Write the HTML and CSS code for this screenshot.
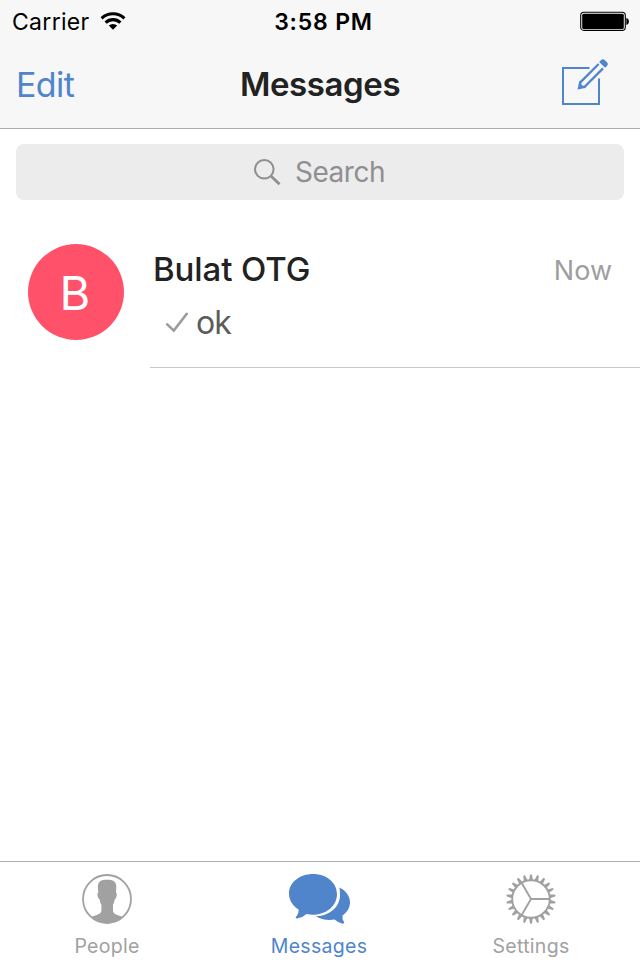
FILE: index.html
```html
<!DOCTYPE html>
<html lang="en">
  <head>
    <meta charset="UTF-8" />
    <meta name="viewport" content="width=device-width, initial-scale=1.0" />
    <title>Messages</title>
    <link rel="stylesheet" href="styles.css" />
  </head>
  <body>
    <header class="header">
      <div class="status-bar">
        <div class="carrier">
          <span class="carrier-name">Carrier</span>
          <svg class="wifi" width="26" height="20" viewBox="0 0 26 20">
            <g fill="none" stroke="#000" stroke-width="3.1">
              <path d="M1.6 7.4a16.3 16.3 0 0 1 22.8 0" />
              <path d="M5.6 11.6a10.6 10.6 0 0 1 14.8 0" />
            </g>
            <path d="M13 18.8L8.8 14.6a6 6 0 0 1 8.4 0z" />
          </svg>
        </div>
        <span class="clock">3:58 PM</span>
        <div class="battery">
          <svg width="50" height="20" viewBox="0 0 50 20">
            <rect x="0.7" y="1.2" width="44.6" height="18.2" rx="3.2" fill="none" stroke="#000" stroke-width="1.1" />
            <rect x="2.2" y="2.7" width="41.6" height="15.2" rx="1.5" />
            <path d="M46.3 6.8q2.7 1 2.7 3.6t-2.7 3.6z" />
          </svg>
        </div>
      </div>
      <nav class="nav-bar">
        <a class="nav-edit">Edit</a>
        <h1 class="nav-title">Messages</h1>
        <a class="nav-compose">
          <svg width="48" height="48" viewBox="0 0 48 48">
            <path d="M29.5 10H3v36h36V20.5" fill="none" stroke="#5085cb" stroke-width="2" />
            <g transform="translate(17.5 31.5) rotate(-45)" fill="#5085cb">
              <path d="M6 -3.1H33M6 3.1H33" fill="none" stroke="#5085cb" stroke-width="2.3" />
              <path d="M0 0L6.5 -4.25H8.5L6 0L8.5 4.25H6.5z" />
              <path d="M34.8 -4.2H37.2Q40 -4.2 40 -1.9V1.9Q40 4.2 37.2 4.2H34.8z" />
            </g>
          </svg>
        </a>
      </nav>
    </header>

    <main class="content">
      <div class="search">
        <svg class="search-icon" width="28" height="28" viewBox="0 0 28 28" fill="none" stroke="#8e8e93">
          <circle cx="11.3" cy="11.3" r="9.3" stroke-width="2" />
          <path d="M18.2 18.2L26.5 26.3" stroke-width="2.8" />
        </svg>
        <span class="search-label">Search</span>
      </div>

      <div class="chat">
        <div class="avatar">B</div>
        <div class="chat-body">
          <div class="chat-top">
            <span class="chat-name">Bulat OTG</span>
            <span class="chat-date">Now</span>
          </div>
          <div class="chat-message">
            <svg class="check" width="24" height="22" viewBox="0 0 24 22">
              <path d="M2.2 13.4L8.8 19.6L21.8 2.8" fill="none" stroke="#9b9b9b" stroke-width="2.6" stroke-linecap="round" />
            </svg>
            <span class="chat-text">ok</span>
          </div>
        </div>
      </div>
    </main>

    <footer class="tab-bar">
      <a class="tab">
        <svg width="52" height="52" viewBox="0 0 52 52">
          <circle cx="26" cy="26" r="24" fill="none" stroke="#a1a1a1" stroke-width="1.8" />
          <path d="M26 6.8C20 6.8 16.9 8.5 16.9 14L17.2 19.5Q16.1 20 16.5 22.5Q17 26 18.6 26.5Q19 30 20.4 31.5V38Q20 40.5 17 41.5L11.5 43.4L9.8 44.2A24.400 24.400 0 0 0 42.2 44.2L40.5 43.4L35 41.5Q32.3 40.5 32 38V31.5Q33.3 30 33.7 26.5Q35.3 26 35.7 22.5Q36.1 20 35 19.5L35.3 14C35.3 8.5 32 6.8 26 6.8z" fill="#a1a1a1" />
        </svg>
        <span class="tab-label">People</span>
      </a>
      <a class="tab tab-active">
        <svg width="64" height="52" viewBox="0 0 64 52" fill="#5085cb">
          <path d="M52.5 14.4C58.3 17.2 63 22.5 63 29.3C63 34.5 60.2 39.5 55.5 42.5Q54.8 46 57.2 49.6Q57 51.2 55 50.6Q50 49 47.5 46.6C41 47.6 33 46.5 29 43.3C42.5 42.8 53 34 53 22Q53 18 52.5 14.4z" />
          <path d="M26 1C12.5 1 2 9.5 2 20.5C2 27 5.5 32.8 11.5 36.4Q12 40.5 8.6 44.2Q8.8 45.8 11 45.3Q16.5 44 19.5 41Q22.5 41.8 26 41.8C39.5 41.8 50 32.5 50 21.3C50 9.5 39.5 1 26 1z" />
        </svg>
        <span class="tab-label">Messages</span>
      </a>
      <a class="tab">
        <svg class="gear" width="52" height="52" viewBox="-26 -26 52 52">
          <g fill="none" stroke="#a1a1a1" stroke-width="1.9">
            <circle r="18.8" />
            <path d="M0 0H18.5M0 0L-9.3 -16M0 0L-9.3 16" />
          </g>
          <g id="teeth" fill="#a1a1a1"></g>
        </svg>
        <span class="tab-label">Settings</span>
      </a>
    </footer>

    <script>
      var teeth = document.getElementById("teeth");
      var count = 22;
      for (var i = 0; i < count; i++) {
        var tooth = document.createElementNS("http://www.w3.org/2000/svg", "path");
        tooth.setAttribute("d", "M-1.9 -19L-1 -24.2Q0 -25.4 1 -24.2L1.9 -19z");
        tooth.setAttribute("transform", "rotate(" + (i * 360) / count + ")");
        teeth.appendChild(tooth);
      }
    </script>
  </body>
</html>
```
FILE: styles.css
```css
body {
  display: flex;
  flex-direction: column;
  height: 100vh;
  margin: 0;
  background-color: #fff;
  font-family: Inter, "Liberation Sans", sans-serif;
}

.header {
  height: 128px;
  background-color: #f7f7f7;
  border-bottom: 1px solid #acacac;
}

.status-bar {
  display: grid;
  grid-template-columns: 1fr auto 1fr;
  align-items: center;
  height: 40px;
  padding: 0 10px 0 12px;
  font-size: 23px;
  line-height: 40px;
  color: #000;
}

.carrier {
  display: flex;
  align-items: center;
  gap: 10px;
}

.carrier-name {
  padding-top: 2px;
  letter-spacing: 0.3px;
}

.clock {
  padding: 2px 0 0 5px;
  font-weight: 600;
  letter-spacing: 0.8px;
}

.battery {
  display: flex;
  justify-content: flex-end;
}

.nav-bar {
  display: grid;
  grid-template-columns: 1fr auto 1fr;
  align-items: center;
  height: 88px;
  padding: 0 16px;
  font-size: 34px;
}

.nav-edit {
  letter-spacing: -0.6px;
  color: #5085cb;
}

.nav-title {
  margin: 0;
  font-size: 33px;
  font-weight: 600;
  letter-spacing: -0.4px;
  color: #222;
}

.nav-compose {
  display: flex;
  justify-content: flex-end;
  padding: 0 16px 4px 0;
}

.content {
  flex: 1;
}

.search {
  display: flex;
  justify-content: center;
  align-items: center;
  gap: 14px;
  height: 56px;
  margin: 15px 16px 16px;
  border-radius: 8px;
  background-color: #ececec;
}

.search-icon {
  margin-left: -2px;
}

.search-label {
  font-size: 28px;
  letter-spacing: -0.5px;
  color: #8e8e93;
}

.chat {
  display: flex;
  gap: 26px;
  height: 152px;
  padding-left: 28px;
}

.avatar {
  width: 96px;
  height: 96px;
  margin-top: 28px;
  border-radius: 50%;
  background-color: #ff516a;
  color: #fff;
  font-size: 47px;
  line-height: 98px;
  text-align: center;
  text-indent: -2px;
}

.chat-body {
  flex: 1;
  padding: 32px 28px 0 3px;
  border-bottom: 1px solid #c8c8c8;
}

.chat-top {
  display: flex;
  justify-content: space-between;
  align-items: center;
  height: 44px;
}

.chat-name {
  padding-bottom: 3px;
  font-size: 33px;
  font-weight: 500;
  letter-spacing: -0.1px;
  color: #222;
}

.chat-date {
  padding-top: 1px;
  font-size: 27px;
  color: #9e9e9e;
}

.chat-message {
  display: flex;
  align-items: center;
  gap: 7px;
  height: 60px;
  padding-left: 12px;
}

.chat-text {
  font-size: 32px;
  letter-spacing: -1px;
  color: #5c5c5c;
}

.tab-bar {
  display: grid;
  grid-template-columns: 214px 210px 214px;
  height: 98px;
  border-top: 1px solid #acacac;
}

.tab {
  display: flex;
  flex-direction: column;
  align-items: center;
  padding-top: 11px;
  color: #a1a1a1;
}

.tab-active {
  color: #5085cb;
}

.tab-label {
  margin-top: 9px;
  font-size: 19.5px;
  line-height: 24px;
  letter-spacing: 0.3px;
}
```
